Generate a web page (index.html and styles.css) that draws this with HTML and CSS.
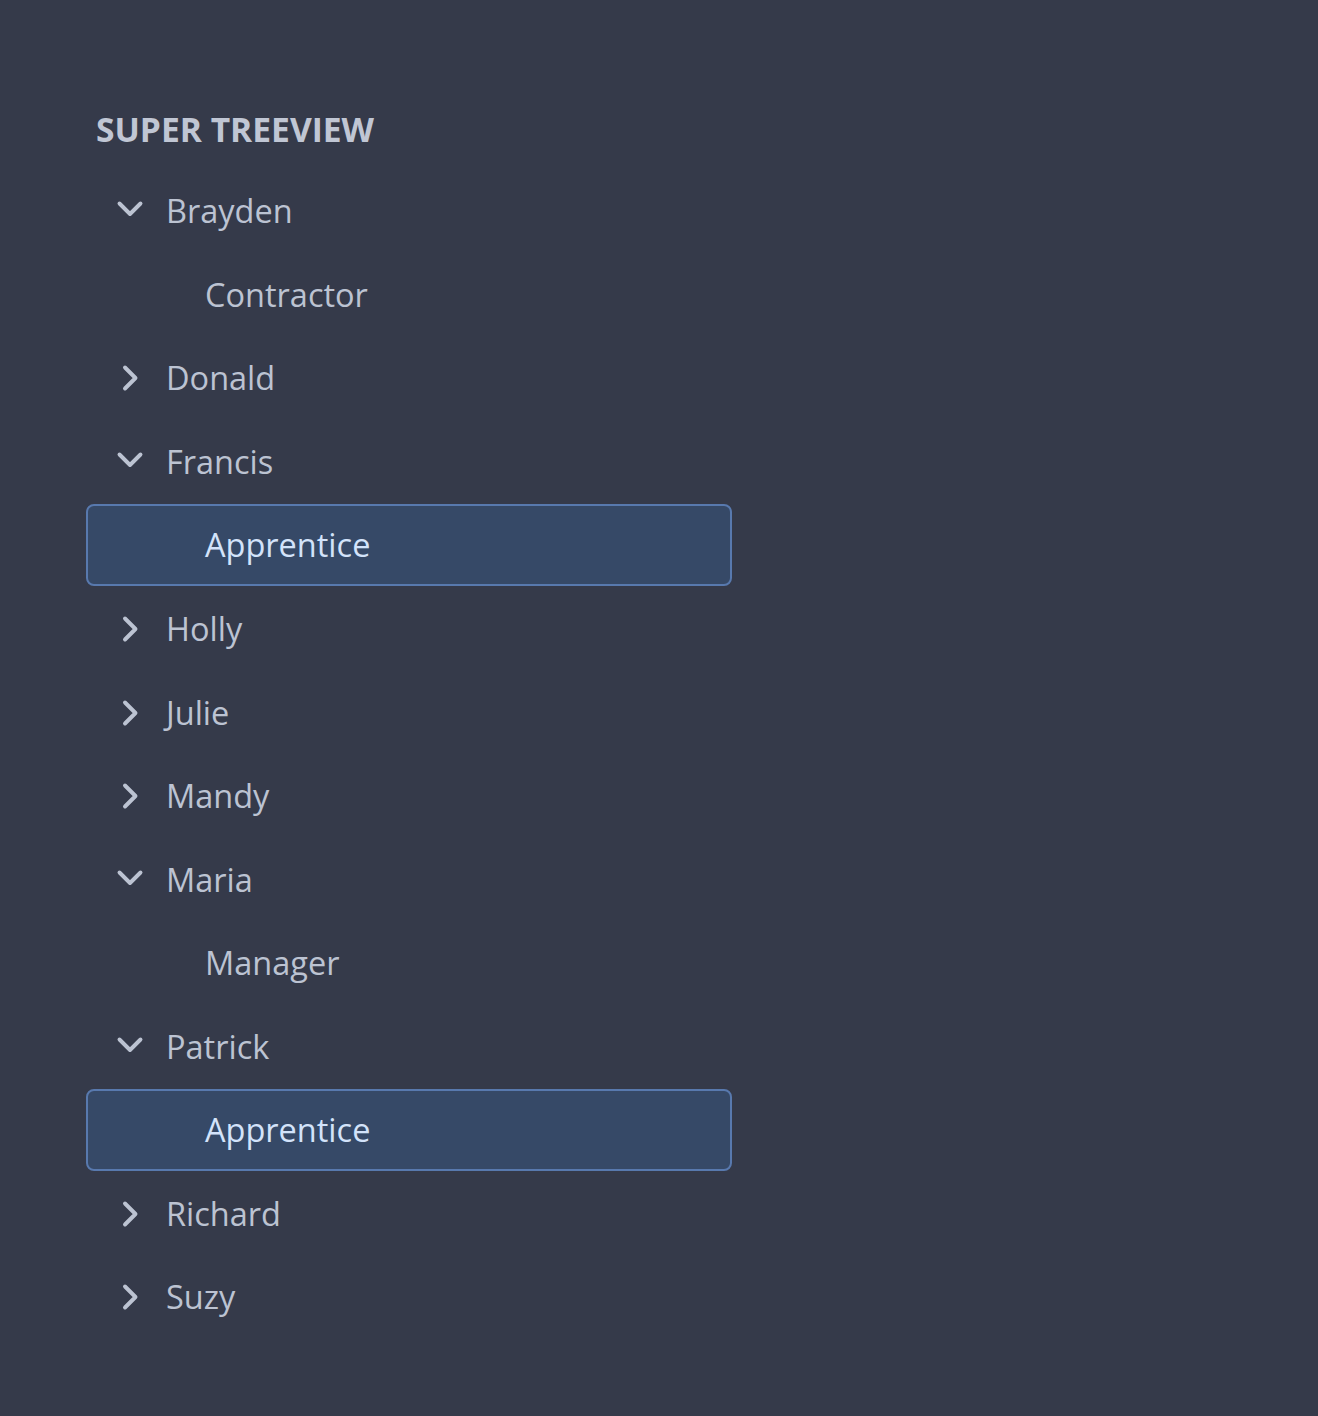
FILE: index.html
```html
<!DOCTYPE html>
<html lang="en">
<head>
<meta charset="utf-8">
<title>Super Treeview</title>
<link rel="stylesheet" href="styles.css">
</head>
<body>
<div class="tree">
  <div class="title">SUPER TREEVIEW</div>
  <ul class="list">
    <li class="row"><svg class="chev" viewBox="0 0 28 28"><polyline points="3.5,6.5 14,17 24.5,6.5"/></svg><span>Brayden</span></li>
    <li class="row child"><span>Contractor</span></li>
    <li class="row"><svg class="chev" viewBox="0 0 28 28"><polyline points="9,3.5 19.5,14 9,24.5"/></svg><span>Donald</span></li>
    <li class="row"><svg class="chev" viewBox="0 0 28 28"><polyline points="3.5,6.5 14,17 24.5,6.5"/></svg><span>Francis</span></li>
    <li class="row child selected"><span>Apprentice</span></li>
    <li class="row"><svg class="chev" viewBox="0 0 28 28"><polyline points="9,3.5 19.5,14 9,24.5"/></svg><span>Holly</span></li>
    <li class="row"><svg class="chev" viewBox="0 0 28 28"><polyline points="9,3.5 19.5,14 9,24.5"/></svg><span>Julie</span></li>
    <li class="row"><svg class="chev" viewBox="0 0 28 28"><polyline points="9,3.5 19.5,14 9,24.5"/></svg><span>Mandy</span></li>
    <li class="row"><svg class="chev" viewBox="0 0 28 28"><polyline points="3.5,6.5 14,17 24.5,6.5"/></svg><span>Maria</span></li>
    <li class="row child"><span>Manager</span></li>
    <li class="row"><svg class="chev" viewBox="0 0 28 28"><polyline points="3.5,6.5 14,17 24.5,6.5"/></svg><span>Patrick</span></li>
    <li class="row child selected"><span>Apprentice</span></li>
    <li class="row"><svg class="chev" viewBox="0 0 28 28"><polyline points="9,3.5 19.5,14 9,24.5"/></svg><span>Richard</span></li>
    <li class="row"><svg class="chev" viewBox="0 0 28 28"><polyline points="9,3.5 19.5,14 9,24.5"/></svg><span>Suzy</span></li>
  </ul>
</div>
</body>
</html>
```
FILE: styles.css
```css
html, body {
  margin: 0;
  padding: 0;
  background: #353a4a;
}
body {
  min-height: 1416px;
  font-family: "Open Sans", "Noto Sans", sans-serif;
  color: #bcc3d2;
}
.tree {
  padding: 109px 0 0 86px;
  width: 646px;
}
.title {
  font-size: 33.6px;
  font-weight: 700;
  line-height: 40px;
  padding-left: 10px;
  color: #c0c6d4;
}
.list {
  list-style: none;
  margin: 21.3px 0 0;
  padding: 0;
  display: flex;
  flex-direction: column;
  gap: 1.55px;
}
.row {
  box-sizing: border-box;
  height: 82px;
  display: flex;
  align-items: center;
  gap: 22px;
  padding-left: 30px;
  font-size: 32.5px;
  line-height: 44px;
  border: 2px solid transparent;
  border-radius: 8px;
}
.row.child {
  padding-left: 117px;
}
.row.selected {
  background: #364967;
  border-color: #5879ae;
  color: #d3e3fa;
}
.chev {
  width: 28px;
  height: 28px;
  flex: none;
  margin-left: -2px;
}
.chev polyline {
  fill: none;
  stroke: #bcc3d2;
  stroke-width: 3.9;
  stroke-linecap: round;
  stroke-linejoin: round;
}
```
